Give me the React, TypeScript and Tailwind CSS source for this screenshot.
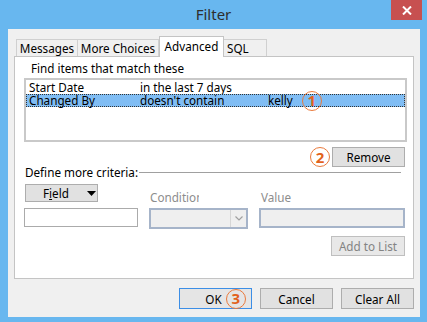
import React from "react";

function Badge({ n }: { n: string }) {
  return (
    <div className="w-[20px] h-[20px] rounded-full border-[1.5px] border-[#ea7a3c] flex items-center justify-center text-[15px] font-bold leading-none text-[#e2621c] font-['Open_Sans',sans-serif]">
      {n}
    </div>
  );
}

function Btn({
  children,
  className = "",
  disabled = false,
}: {
  children: React.ReactNode;
  className?: string;
  disabled?: boolean;
}) {
  return (
    <div
      className={
        "flex items-center justify-center border bg-[#e1e1e1] leading-[14px] " +
        (disabled ? "border-[#bfbfbf] text-[#838383] bg-[#e8e8e8] " : "border-[#adadad] text-black ") +
        className
      }
    >
      {children}
    </div>
  );
}

export default function App() {
  return (
    <div className="w-[427px] h-[322px] bg-[#68b7ef] flex flex-col font-['Segoe_UI','Noto_Sans',sans-serif] text-[11.7px] text-black overflow-hidden">
      {/* title bar */}
      <div className="h-[29px] grid grid-cols-[1fr_auto_1fr]">
        <div />
        <div className="text-[15px] text-[#2e2e2e] leading-[26px] pt-[1px]">Filter</div>
        <div className="flex justify-end pr-[5px]">
          <div className="w-[31px] h-[20px] bg-[#c75050] flex items-center justify-center">
            <svg width="10" height="9" viewBox="0 0 10 9">
              <path d="M1 0.5 L9 8.5 M9 0.5 L1 8.5" stroke="white" strokeWidth="2" />
            </svg>
          </div>
        </div>
      </div>

      {/* client */}
      <div className="ml-[8px] w-[412px] h-[288px] bg-[#f0f0f0] flex flex-col px-[6px] pt-[7px]">
        {/* tabs */}
        <div className="flex items-end h-[21px] pl-[2px] relative z-10 -mb-px">
          <div className="w-[62px] h-[17px] mb-px border border-b-0 border-[#d0d0d0] bg-[#f0f0f0] flex items-center justify-center leading-[14px]">
            Messages
          </div>
          <div className="w-[81px] h-[17px] mb-px border border-b-0 border-l-0 border-[#d0d0d0] bg-[#f0f0f0] flex items-center justify-center leading-[14px]">
            More Choices
          </div>
          <div className="w-[65px] h-[21px] border border-b-0 border-[#c4c4c4] bg-white flex justify-center pt-[2px] leading-[14px]">
            Advanced
          </div>
          <div className="w-[43px] h-[17px] mb-px border border-b-0 border-l-0 border-[#d0d0d0] bg-[#f0f0f0] flex items-center pl-[3px] leading-[14px]">
            SQL
          </div>
        </div>

        {/* panel */}
        <div className="w-[400px] h-[223px] border border-[#c4c4c4] bg-white flex flex-col">
          <div className="ml-[16px] mt-[3px] h-[16px] leading-[16px]">Find items that match these</div>

          {/* listbox */}
          <div className="ml-[9px] mt-[2px] w-[383px] h-[64px] border-2 border-[#c9c9c9] bg-white flex flex-col pt-[1px]">
            <div className="h-[13px] flex items-center leading-[13px] pl-[3px]">
              <span className="w-[111px]">Start Date</span>
              <span>in the last 7 days</span>
            </div>
            <div className="h-[13px] flex items-center leading-[11px] pl-[2px] bg-[#80bdf4] border border-dotted border-[#333]">
              <span className="w-[111px]">Changed By</span>
              <span className="w-[128px]">doesn't contain</span>
              <span>kelly</span>
              <div className="ml-[9px]">
                <Badge n="1" />
              </div>
            </div>
          </div>

          {/* remove row */}
          <div className="mt-[5px] mr-[8px] flex justify-end items-center gap-[2px]">
            <Badge n="2" />
            <Btn className="w-[73px] h-[20px]">Remove</Btn>
          </div>

          {/* define more criteria */}
          <div className="-mt-px h-[12px] flex items-center ml-[10px] mr-[12px]">
            <span className="leading-[12px]">Define more criteria:</span>
            <div className="flex-1 h-px bg-[#a0a0a0] ml-px" />
          </div>

          {/* criteria grid */}
          <div className="ml-[9px] mt-[6px] grid grid-cols-[114px_99px_146px] gap-x-[11px]">
            <div className="h-[20px] pl-[1px]">
              <Btn className="w-[73px] h-[18px] justify-start pl-[17px]">
                <span>
                  F<span className="underline">i</span>eld
                </span>
                <svg className="ml-[18px]" width="9" height="5" viewBox="0 0 9 5">
                  <path d="M0 0 H9 L4.5 5 Z" fill="black" />
                </svg>
              </Btn>
            </div>
            <div className="h-[20px] flex items-end leading-[14px] pl-[1px]">
              <div className="w-[49px] overflow-hidden whitespace-nowrap text-[#8d8d8d]">Condition</div>
            </div>
            <div className="h-[20px] flex items-end text-[#8d8d8d] leading-[14px] ml-px pl-[1px]">Value</div>

            <div className="mt-[4px] h-[19px] border border-[#ababab] bg-white" />
            <div className="mt-[4px] h-[21px] border-2 border-[#a6b4c9] bg-[#efefef] flex justify-end">
              <div className="w-[16px] h-full border-l border-[#d6d6d6] flex items-center justify-center">
                <svg width="8" height="5" viewBox="0 0 8 5">
                  <path d="M0.5 0.5 L4 4 L7.5 0.5" stroke="#a0a0a0" strokeWidth="1.2" fill="none" />
                </svg>
              </div>
            </div>
            <div className="mt-[4px] h-[20px] border-2 border-[#a6b4c9] bg-[#efefef]" />
          </div>

          {/* add to list */}
          <div className="mt-[7px] mr-[8px] flex justify-end">
            <Btn disabled className="w-[74px] h-[20px]">
              Add to List
            </Btn>
          </div>
        </div>

        {/* bottom buttons */}
        <div className="mt-[9px] flex justify-end gap-[8px]">
          <div className="w-[73px] h-[21px] border border-[#3c8ee6] bg-[#e5e5e5] flex items-center justify-center gap-[4px] pl-[20px] leading-[14px]">
            <span>OK</span>
            <Badge n="3" />
          </div>
          <Btn className="w-[73px] h-[21px]">Cancel</Btn>
          <Btn className="w-[73px] h-[21px]">Clear All</Btn>
        </div>
      </div>
    </div>
  );
}
